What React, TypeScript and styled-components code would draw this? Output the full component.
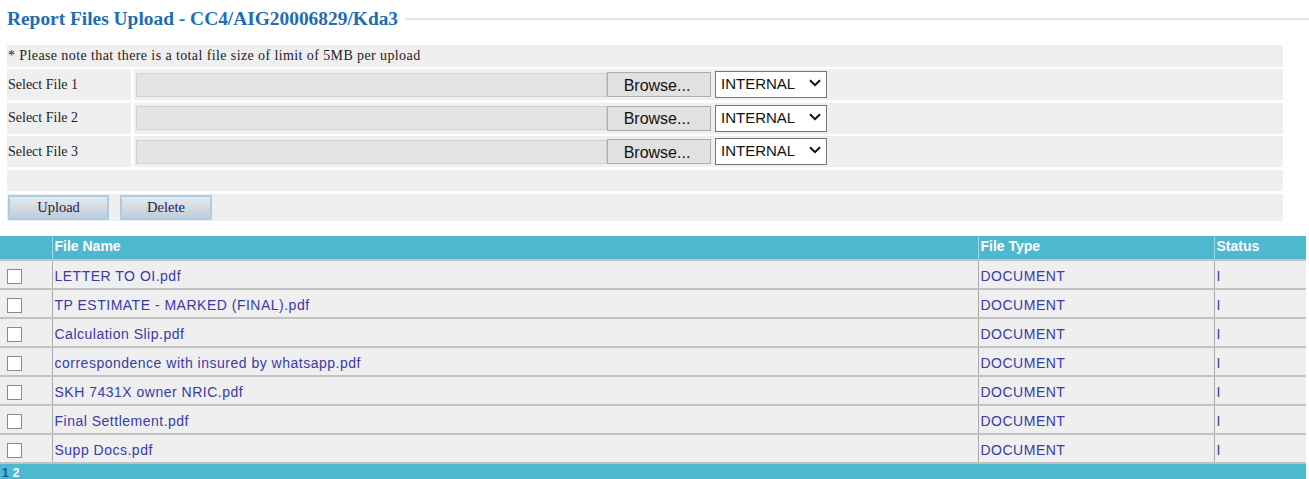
import React from "react";
import styled, { createGlobalStyle } from "styled-components";

const Global = createGlobalStyle`
  html, body { margin: 0; padding: 0; background: #ffffff; }
  body { font-family: "Liberation Serif", "Times New Roman", serif; color: #222; }
  * { box-sizing: border-box; }
`;

const Page = styled.div`
  width: 1309px;
  height: 479px;
  overflow: hidden;
`;

const Header = styled.div`
  display: flex;
  align-items: center;
  height: 20px;
  margin-top: 9px;
  padding-left: 7px;
  gap: 7px;
`;

const Title = styled.h1`
  margin: 0;
  font-family: "Liberation Serif", "Times New Roman", serif;
  font-weight: bold;
  font-size: 19.4px;
  color: #1e6db3;
  white-space: nowrap;
`;

const Rule = styled.div`
  flex: 1;
  height: 2px;
  background: #e6e6e6;
`;

const FormGrid = styled.div`
  display: grid;
  grid-template-columns: 124px 1fr;
  column-gap: 3px;
  row-gap: 2.5px;
  width: 1276px;
  margin: 16px 0 0 7px;
`;

const FullCell = styled.div<{ $h: number }>`
  grid-column: 1 / -1;
  height: ${(p) => p.$h}px;
  background: #efefef;
  display: flex;
  align-items: center;
  padding-left: 1px;
  font-size: 14px;
  color: #222;
  gap: 11px;
`;

const Note = styled(FullCell)`
  letter-spacing: 0.4px;
`;

const LabelCell = styled.div`
  height: 31px;
  background: #efefef;
  display: flex;
  align-items: center;
  padding-left: 1px;
  font-size: 14px;
  color: #222;
`;

const InputCell = styled.div`
  height: 31px;
  background: #efefef;
  display: flex;
  align-items: center;
  padding-left: 2px;
`;

const FileText = styled.div`
  width: 471px;
  height: 24px;
  background: #e4e4e4;
  border: 1px solid #d2d2d2;
`;

const BrowseButton = styled.button`
  width: 104px;
  height: 25px;
  background: #e1e1e1;
  border: 1px solid #adadad;
  font-family: "Liberation Sans", Arial, sans-serif;
  font-size: 16px;
  color: #111;
  padding: 2px 4px 0 0;
  display: flex;
  align-items: center;
  justify-content: center;
`;

const SelectWrap = styled.div`
  position: relative;
  margin-left: 4px;
  width: 112px;
  height: 27px;
`;

const Select = styled.select`
  appearance: none;
  -webkit-appearance: none;
  width: 112px;
  height: 27px;
  background: #ffffff;
  border: 1px solid #767676;
  border-radius: 0;
  font-family: "Liberation Sans", Arial, sans-serif;
  font-size: 15px;
  color: #111;
  padding: 0 0 2px 5px;
`;

const Chevron = styled.svg`
  position: absolute;
  right: 6px;
  top: 8px;
  pointer-events: none;
`;

const ActionButton = styled.button<{ $w: number }>`
  width: ${(p) => p.$w}px;
  height: 25px;
  background: linear-gradient(to bottom, #e4ebf1 0%, #d3dce5 45%, #c3cdd8 100%);
  border: 2px solid #a8cde6;
  font-family: "Liberation Serif", "Times New Roman", serif;
  font-size: 14.5px;
  color: #1f2244;
  padding: 0;
`;

const Table = styled.table`
  width: 1306px;
  margin-top: 15.5px;
  border-collapse: collapse;
  font-family: "Liberation Sans", Arial, sans-serif;
`;

const Th = styled.th<{ $w?: number }>`
  ${(p) => (p.$w ? `width: ${p.$w}px;` : "")}
  height: 24px;
  background: #4db8d0;
  color: #ffffff;
  font-weight: bold;
  font-size: 14px;
  text-align: left;
  padding: 0 0 3px 2px;
  border-left: 1px solid #9fd6e3;
  border-bottom: 2px solid #c3c3c3;
  &:first-child { border-left: none; }
`;

const Td = styled.td`
  height: 29px;
  background: #efefef;
  color: #3a3aa8;
  font-size: 14px;
  letter-spacing: 0.5px;
  padding: 3px 0 0 2px;
  border-left: 1px solid #a9a9a9;
  border-bottom: 2px solid #c3c3c3;
  &:first-child { border-left: none; padding-left: 7px; }
`;

const Check = styled.input`
  appearance: none;
  -webkit-appearance: none;
  display: block;
  width: 15px;
  height: 15px;
  margin: 0;
  background: #ffffff;
  border: 1px solid #8a8a8a;
`;

const Footer = styled.div`
  height: 17px;
  width: 1306px;
  background: #4db8d0;
  font-family: "Liberation Sans", Arial, sans-serif;
  font-weight: bold;
  font-size: 12px;
  padding-left: 2px;
  display: flex;
  align-items: center;
  gap: 4px;
`;

const PageLink = styled.span<{ $active?: boolean }>`
  color: ${(p) => (p.$active ? "#1a55b0" : "#ffffff")};
`;

const files = [
  "LETTER TO OI.pdf",
  "TP ESTIMATE - MARKED (FINAL).pdf",
  "Calculation Slip.pdf",
  "correspondence with insured by whatsapp.pdf",
  "SKH 7431X owner NRIC.pdf",
  "Final Settlement.pdf",
  "Supp Docs.pdf",
];

function FileRow({ n }: { n: number }) {
  return (
    <>
      <LabelCell>Select File {n}</LabelCell>
      <InputCell>
        <FileText />
        <BrowseButton>Browse...</BrowseButton>
        <SelectWrap>
          <Select defaultValue="INTERNAL">
            <option>INTERNAL</option>
            <option>EXTERNAL</option>
          </Select>
          <Chevron width="12" height="8" viewBox="0 0 12 8">
            <path d="M1 1.2 L6 6.2 L11 1.2" fill="none" stroke="#111" strokeWidth="2" />
          </Chevron>
        </SelectWrap>
      </InputCell>
    </>
  );
}

export default function App() {
  return (
    <Page>
      <Global />
      <Header>
        <Title>Report Files Upload - CC4/AIG20006829/Kda3</Title>
        <Rule />
      </Header>
      <FormGrid>
        <Note $h={21.5}>* Please note that there is a total file size of limit of 5MB per upload</Note>
        <FileRow n={1} />
        <FileRow n={2} />
        <FileRow n={3} />
        <FullCell $h={21.5} />
        <FullCell $h={27}>
          <ActionButton $w={101}>Upload</ActionButton>
          <ActionButton $w={92}>Delete</ActionButton>
        </FullCell>
      </FormGrid>
      <Table>
        <thead>
          <tr>
            <Th $w={52}></Th>
            <Th>File Name</Th>
            <Th $w={236}>File Type</Th>
            <Th $w={92}>Status</Th>
          </tr>
        </thead>
        <tbody>
          {files.map((f) => (
            <tr key={f}>
              <Td>
                <Check type="checkbox" />
              </Td>
              <Td>{f}</Td>
              <Td>DOCUMENT</Td>
              <Td>I</Td>
            </tr>
          ))}
        </tbody>
      </Table>
      <Footer>
        <PageLink $active>1</PageLink>
        <PageLink>2</PageLink>
      </Footer>
    </Page>
  );
}
